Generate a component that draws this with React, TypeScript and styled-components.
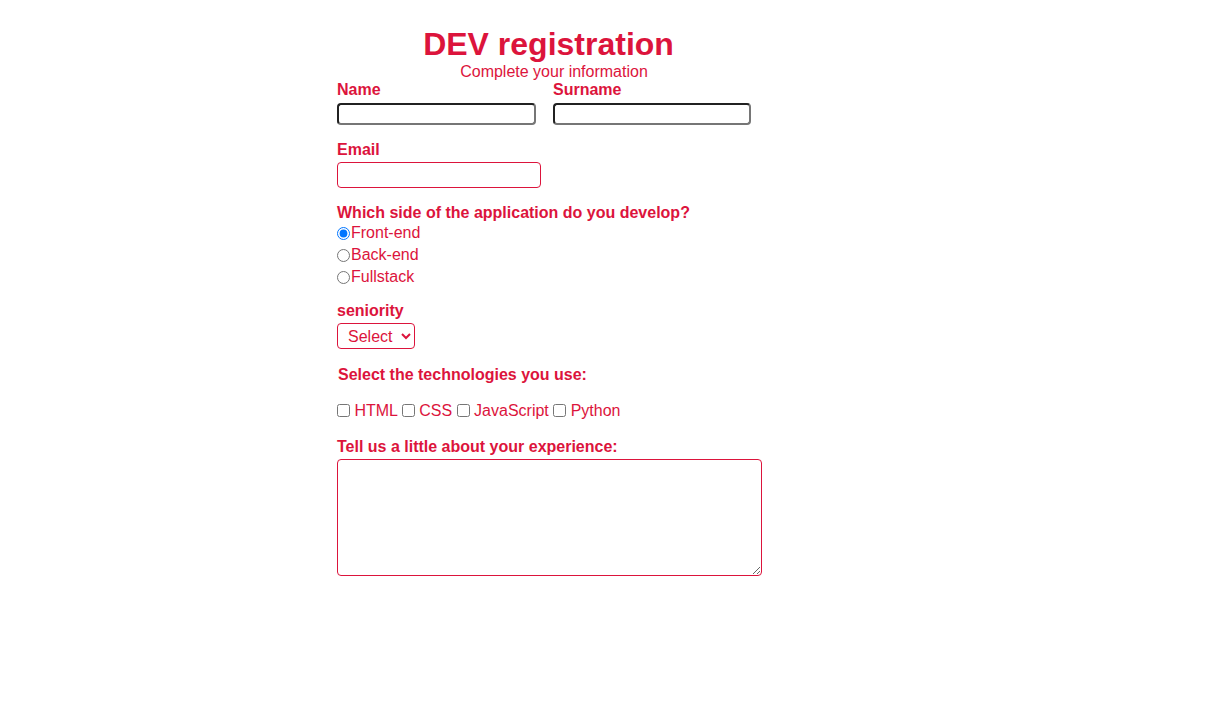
import React from "react";
import styled, { createGlobalStyle } from "styled-components";

const Global = createGlobalStyle`
  body {
    margin: 8px;
    background: #ffffff;
    font-family: "Liberation Sans", Arial, sans-serif;
    color: crimson;
  }
`;

const Form = styled.form`
  width: 425px;
  margin-left: 329px;
  padding-top: 18px;
  display: flex;
  flex-direction: column;
`;

const Title = styled.h1`
  margin: 0;
  padding-right: 2px;
  font-size: 32px;
  line-height: 37px;
  font-weight: bold;
  text-align: center;
  color: crimson;
`;

const Subtitle = styled.p`
  margin: 0;
  padding-left: 9px;
  font-size: 16px;
  line-height: 18px;
  text-align: center;
`;

const Section = styled.div<{ $mt: number }>`
  margin-top: ${(p) => p.$mt}px;
  display: flex;
  flex-direction: column;
  align-items: flex-start;
`;

const Row = styled.div`
  display: flex;
  gap: 17px;
`;

const Field = styled.div`
  display: flex;
  flex-direction: column;
  align-items: flex-start;
  gap: 4px;
`;

const Label = styled.label<{ $indent?: number }>`
  font-size: 16px;
  line-height: 18px;
  font-weight: bold;
  color: crimson;
  padding-left: ${(p) => p.$indent ?? 0}px;
`;

const PlainInput = styled.input<{ $w: number }>`
  box-sizing: border-box;
  width: ${(p) => p.$w}px;
  height: 22px;
  margin: 0;
  border-radius: 4px;
  font-size: 13.33px;
`;

const EmailInput = styled.input`
  box-sizing: border-box;
  width: 204px;
  height: 26px;
  margin: 3px 0 0;
  border: 1px solid crimson;
  border-radius: 4px;
  outline: none;
`;

const RadioRow = styled.div`
  height: 22px;
  display: flex;
  align-items: center;
  font-size: 16px;
  color: crimson;
`;

const Radio = styled.input`
  width: 13px;
  height: 13px;
  margin: 0 1px 0 0;
`;

const SelectBox = styled.select`
  box-sizing: border-box;
  width: 78px;
  height: 26px;
  margin-top: 3px;
  padding: 0 0 0 6px;
  border: 1px solid crimson;
  border-radius: 4px;
  background: #fff;
  color: crimson;
  font-family: "Liberation Sans", Arial, sans-serif;
  font-size: 16px;
`;

const Checks = styled.div`
  margin-top: 18px;
  font-size: 16px;
  line-height: 18px;
  color: crimson;
`;

const Check = styled.input`
  width: 13px;
  height: 13px;
  margin: 0;
  vertical-align: -1px;
`;

const Area = styled.textarea`
  box-sizing: border-box;
  width: 425px;
  height: 117px;
  margin-top: 3px;
  border: 1px solid crimson;
  border-radius: 4px;
  outline: none;
`;

export default function App() {
  return (
    <>
      <Global />
      <Form onSubmit={(e) => e.preventDefault()}>
        <Title>DEV registration</Title>
        <Subtitle>Complete your information</Subtitle>
        <Row>
          <Field>
            <Label>Name</Label>
            <PlainInput $w={199} type="text" />
          </Field>
          <Field>
            <Label>Surname</Label>
            <PlainInput $w={198} type="text" />
          </Field>
        </Row>
        <Section $mt={16}>
          <Label>Email</Label>
          <EmailInput type="email" />
        </Section>
        <Section $mt={16}>
          <Label>Which side of the application do you develop?</Label>
          <RadioRow>
            <Radio type="radio" name="side" defaultChecked />
            Front-end
          </RadioRow>
          <RadioRow>
            <Radio type="radio" name="side" />
            Back-end
          </RadioRow>
          <RadioRow>
            <Radio type="radio" name="side" />
            Fullstack
          </RadioRow>
        </Section>
        <Section $mt={14}>
          <Label>seniority</Label>
          <SelectBox defaultValue="">
            <option value="">Select</option>
            <option value="junior">Junior</option>
            <option value="mid">Mid</option>
            <option value="senior">Senior</option>
          </SelectBox>
        </Section>
        <Section $mt={17}>
          <Label $indent={1}>Select the technologies you use:</Label>
          <Checks>
            <Check type="checkbox" /> HTML <Check type="checkbox" /> CSS{" "}
            <Check type="checkbox" /> JavaScript <Check type="checkbox" /> Python
          </Checks>
        </Section>
        <Section $mt={18}>
          <Label>Tell us a little about your experience:</Label>
          <Area />
        </Section>
      </Form>
    </>
  );
}
